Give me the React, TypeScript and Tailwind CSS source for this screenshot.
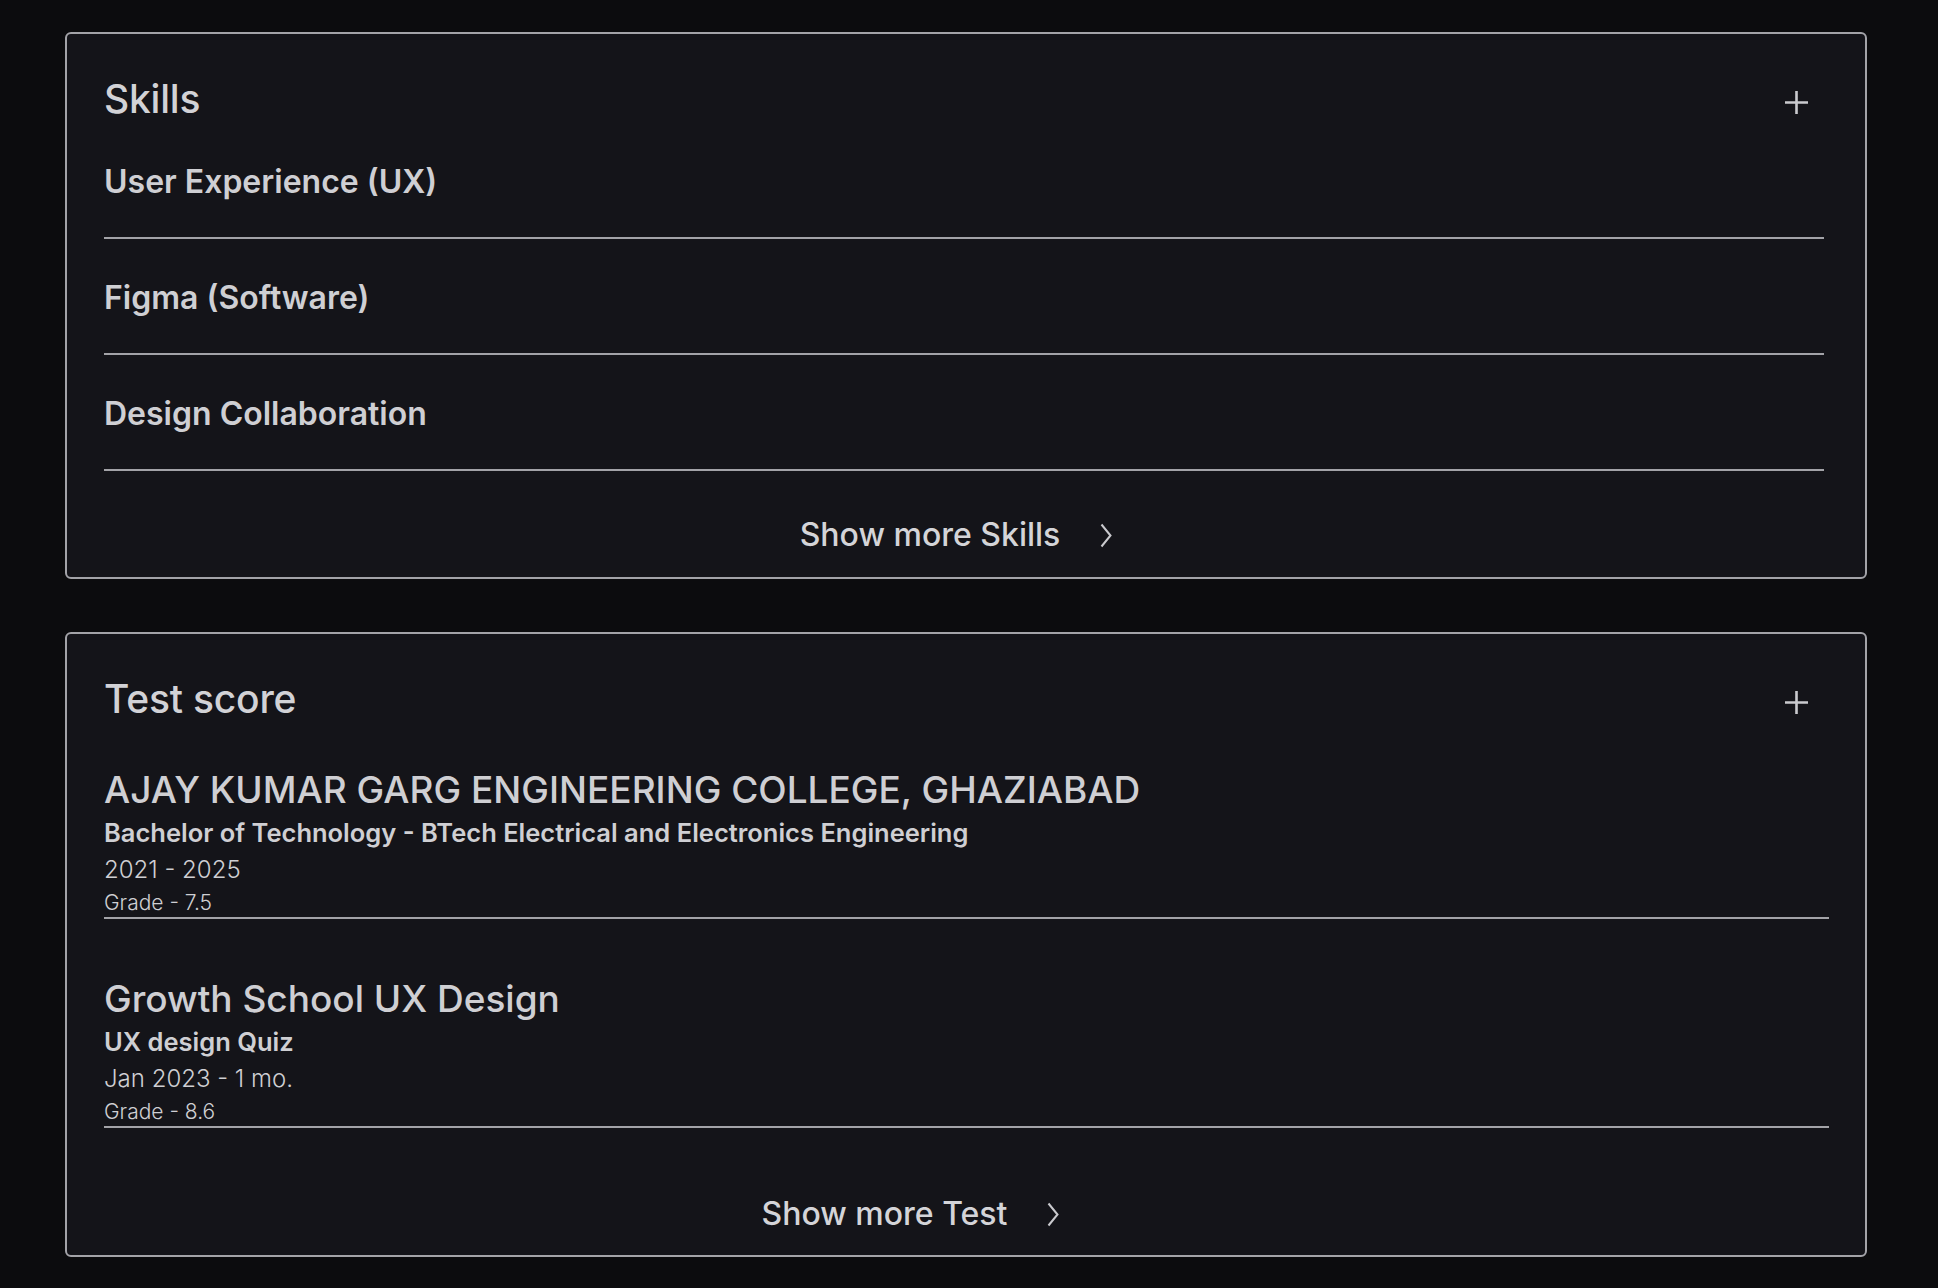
import React from 'react';

const skills = ['User Experience (UX)', 'Figma (Software)', 'Design Collaboration'];

const tests = [
  {
    title: 'AJAY KUMAR GARG ENGINEERING COLLEGE, GHAZIABAD',
    subtitle: 'Bachelor of Technology - BTech Electrical and Electronics Engineering',
    period: '2021 - 2025',
    grade: 'Grade - 7.5',
  },
  {
    title: 'Growth School UX Design',
    subtitle: 'UX design Quiz',
    period: 'Jan 2023 - 1 mo.',
    grade: 'Grade - 8.6',
  },
];

function PlusIcon() {
  return (
    <svg width="23" height="23" viewBox="0 0 23 23" className="text-[#cacace]">
      <path d="M0 11.5h23M11.5 0v23" stroke="currentColor" strokeWidth="2.6" fill="none" />
    </svg>
  );
}

function Chevron() {
  return (
    <svg width="12" height="25" viewBox="0 0 12 25" className="text-[#cacace]">
      <path d="M1.5 1.5 10.5 12.5 1.5 23.5" stroke="currentColor" strokeWidth="2" fill="none" />
    </svg>
  );
}

function CardHeader({ title, iconGap }: { title: string; iconGap: string }) {
  return (
    <div className="flex items-start justify-between">
      <h2 className="text-[39px] leading-[40px] font-medium text-[#d2d2d6] tracking-[-0.2px]">{title}</h2>
      <button className={`mt-[12px] ${iconGap}`}>
        <PlusIcon />
      </button>
    </div>
  );
}

function ShowMore({ label, shift }: { label: string; shift: string }) {
  return (
    <button className={`flex items-center justify-center gap-[40px] w-full ${shift}`}>
      <span className="text-[32px] leading-[36px] font-medium text-[#d4d4d8]">{label}</span>
      <Chevron />
    </button>
  );
}

export default function App() {
  return (
    <div className="min-h-screen bg-[#0c0c0e] pt-[32px] pb-[31px] font-['Inter',sans-serif]">
      <div className="ml-[65px] w-[1802px] flex flex-col gap-[53px]">
        {/* Skills */}
        <section className="bg-[#141419] border-2 border-[#a3a3a8] rounded-[6px] pt-[45px] pb-[24px] pl-[37px] pr-[41px]">
          <CardHeader title="Skills" iconGap="mr-[16px]" />
          <ul>
            {skills.map((s) => (
              <li key={s} className="pt-[41px] pb-[37px] border-b-2 border-[#a3a3a8] first:pt-[45px]">
                <span className="block text-[32px] leading-[36px] font-semibold text-[#cfcfd3]">{s}</span>
              </li>
            ))}
          </ul>
          <div className="mt-[46px]">
            <ShowMore label="Show more Skills" shift="-translate-x-[8px]" />
          </div>
        </section>

        {/* Test score */}
        <section className="bg-[#141419] border-2 border-[#a3a3a8] rounded-[6px] pt-[45px] pb-[23px] pl-[37px] pr-[36px]">
          <CardHeader title="Test score" iconGap="mr-[21px]" />
          <ul>
            {tests.map((t, i) => (
              <li
                key={t.title}
                className={`${i === 0 ? 'pt-[49px]' : 'pt-[58px]'} pb-[1px] border-b-2 border-[#a3a3a8] text-[#cfcfd3]`}
              >
                <p className="text-[37px] leading-[44px] font-medium">{t.title}</p>
                <p className="mt-[5px] text-[25.5px] leading-[32px] font-semibold">{t.subtitle}</p>
                <p className="mt-[5px] text-[24px] leading-[32px] font-light">{t.period}</p>
                <p className="mt-[4px] text-[21px] leading-[26px] font-light">{t.grade}</p>
              </li>
            ))}
          </ul>
          <div className="mt-[68px]">
            <ShowMore label="Show more Test" shift="-translate-x-[56px]" />
          </div>
        </section>
      </div>
    </div>
  );
}
